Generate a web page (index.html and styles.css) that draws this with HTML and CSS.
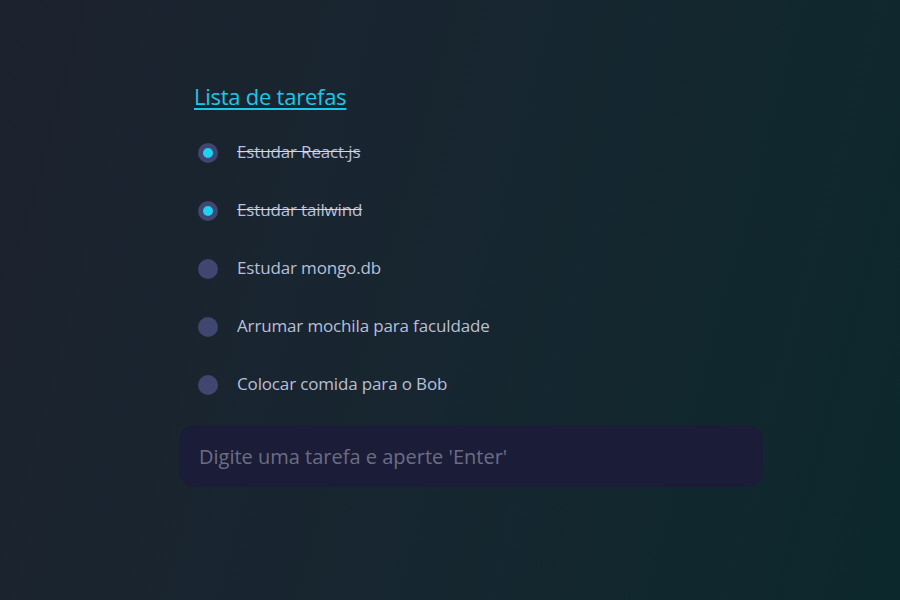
FILE: index.html
```html
<!DOCTYPE html>
<html lang="pt-BR">
<head>
<meta charset="utf-8">
<title>Lista de tarefas</title>
<link rel="stylesheet" href="styles.css">
</head>
<body>
<main class="app">
  <h1 class="title">Lista de tarefas</h1>
  <ul class="list">
    <li class="item done"><span class="check"><span class="dot"></span></span><span class="label">Estudar React.js</span></li>
    <li class="item done"><span class="check"><span class="dot"></span></span><span class="label">Estudar tailwind</span></li>
    <li class="item"><span class="check"></span><span class="label">Estudar mongo.db</span></li>
    <li class="item"><span class="check"></span><span class="label">Arrumar mochila para faculdade</span></li>
    <li class="item"><span class="check"></span><span class="label">Colocar comida para o Bob</span></li>
  </ul>
  <input class="new-task" type="text" placeholder="Digite uma tarefa e aperte 'Enter'">
</main>
</body>
</html>
```
FILE: styles.css
```css
* { box-sizing: border-box; }
html, body { margin: 0; height: 100%; }
body {
  background: linear-gradient(105deg, #1c222e 0%, #172630 50%, #0c282c 100%);
  font-family: "Open Sans", "Liberation Sans", sans-serif;
}
.app {
  width: 584px;
  margin-left: 179px;
  padding-top: 81px;
  display: flex;
  flex-direction: column;
}
.title {
  margin: 0 0 13px 15px;
  font-size: 22px;
  line-height: 30px;
  font-weight: 400;
  letter-spacing: -0.25px;
  color: #19c9e6;
  text-decoration: underline;
  text-underline-offset: 3px;
  text-decoration-thickness: 2px;
}
.list { list-style: none; margin: 0; padding: 0; }
.item {
  height: 58px;
  display: flex;
  align-items: center;
  gap: 19px;
  padding-left: 19px;
}
.check {
  width: 20px;
  height: 20px;
  border-radius: 50%;
  background: #3f4670;
  display: flex;
  align-items: center;
  justify-content: center;
  flex: none;
}
.dot {
  width: 10px;
  height: 10px;
  border-radius: 50%;
  background: #1ed3f2;
}
.label {
  font-size: 17px;
  line-height: 22px;
  padding-bottom: 2px;
  letter-spacing: -0.15px;
  color: #b9bfd8;
}
.done .label {
  text-decoration: line-through;
  text-decoration-color: #d6d8e4;
}
.new-task {
  margin-top: 11px;
  height: 62px;
  width: 100%;
  border: none;
  outline: none;
  border-radius: 16px;
  background: #1b1c38;
  padding: 0 20px;
  font-family: inherit;
  font-size: 20px;
  color: #c8cbe0;
}
.new-task::placeholder { color: #6b6e82; }
```
